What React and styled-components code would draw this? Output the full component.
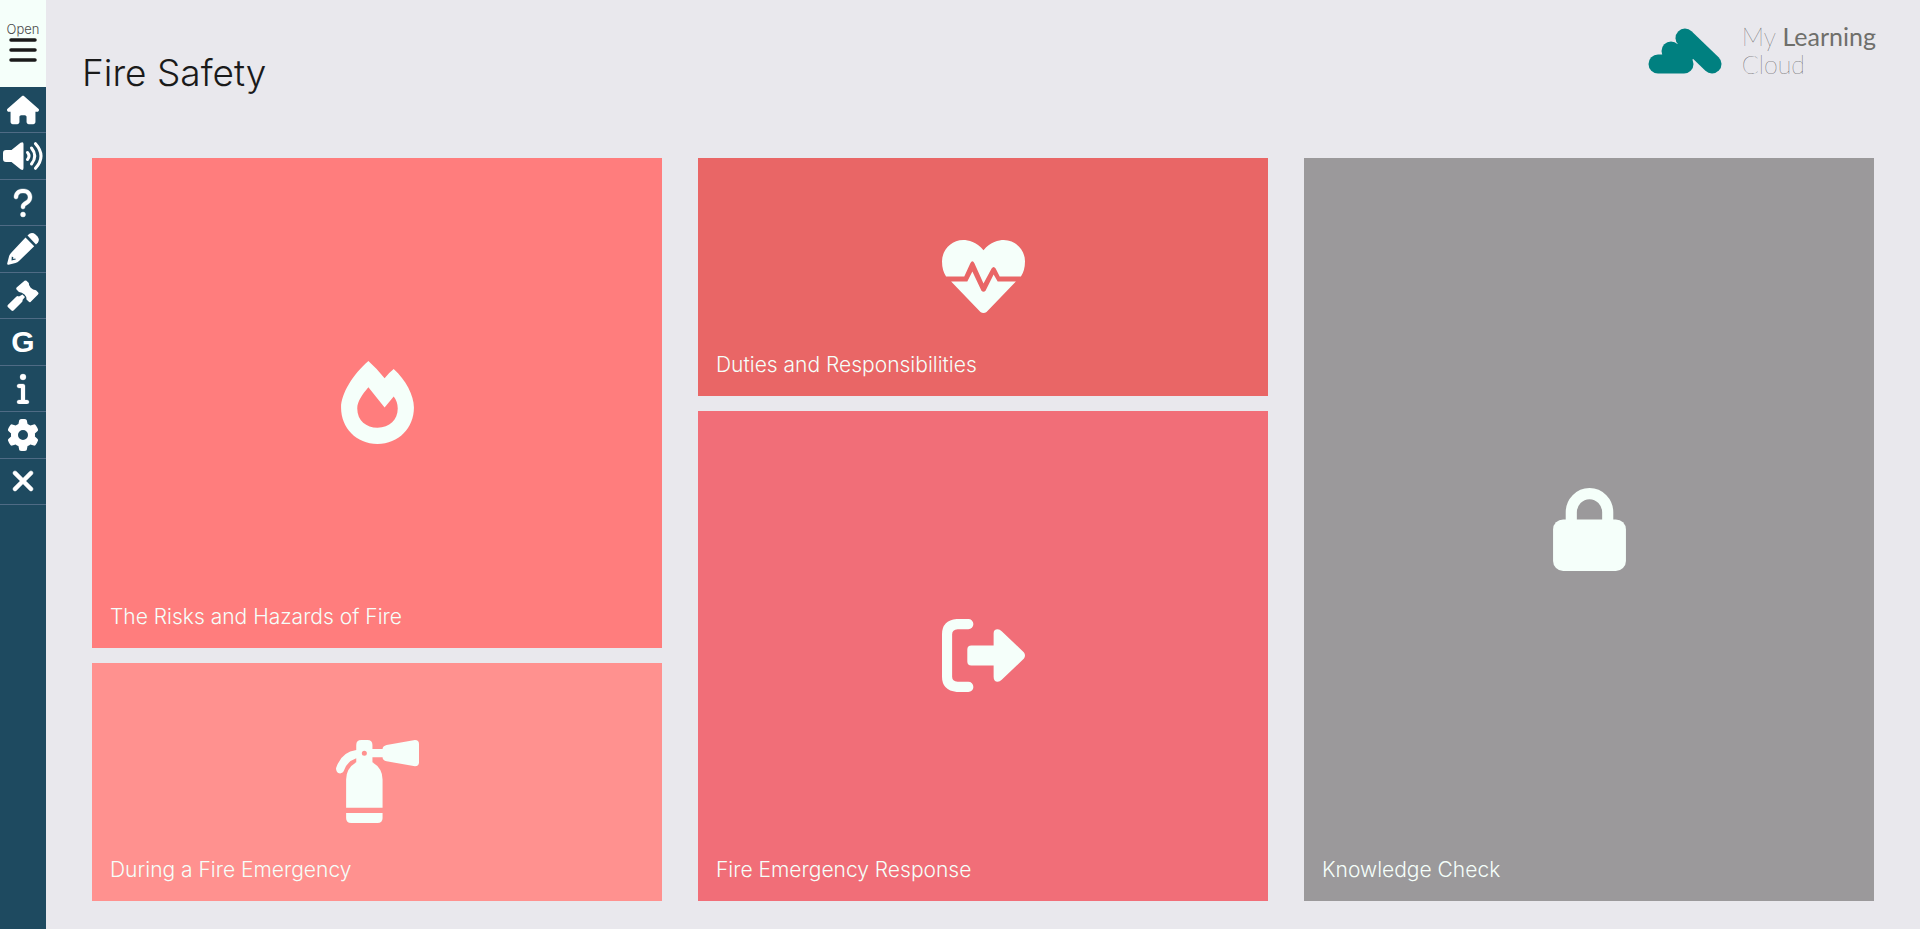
import styled, { createGlobalStyle } from "styled-components";
import {
  FaHouse,
  FaQuestion,
  FaInfo,
  FaGear,
  FaXmark,
} from "react-icons/fa6";

const GlobalStyle = createGlobalStyle`
  * {
    box-sizing: border-box;
  }
  body {
    margin: 0;
    background: #e9e8ed;
    color: #1a1a1a;
    font-family: Inter, "Open Sans", sans-serif;
    font-weight: 300;
  }
`;

const VolumeIcon = () => (
  <svg width="40" height="28" viewBox="0 0 40 28" fill="#ffffff">
    <path d="M3 8H8.5L17.5.8Q20.5-1 20.5 2V26Q20.5 29 17.5 27.2L8.5 20H3Q0 20 0 17V11Q0 8 3 8Z" />
    <g fill="none" stroke="#ffffff" strokeWidth="3" strokeLinecap="round">
      <path d="M24.5 10.5Q27.5 14 24.500 17.500" />
      <path d="M28.500 6Q35 14 28.500 22" />
      <path d="M32.500 1.700Q43.500 14 32.500 26.300" />
    </g>
  </svg>
);

const PencilIcon = () => (
  <svg width="32" height="32" viewBox="0 0 32 32" fill="#ffffff">
    <path d="M20.500 2.500L22.500 .8Q25.500-1 28.500 1.500L30.500 3.500Q33 6.500 31 9.500L29 11.500Z" />
    <path
      fillRule="evenodd"
      d="M18.500 4.500L27.200 13.300L12 28Q10.500 29.300 8.500 30L1.500 31.800Q0 32 .2 30.500L2 23.500Q2.500 21.500 4 20ZM4.800 23.500L4.500 27.500L8.800 26.500L8.300 25.600L6.200 26L6.300 24.200Z"
    />
  </svg>
);

const GavelIcon = () => (
  <svg width="32" height="32" viewBox="0 0 32 32" fill="#ffffff">
    <path d="M17.500.8Q18.500 0 19.500.8L21.800 3Q21.500 5.500 23.700 7.700Q26 10 29 10.200L31.200 12.500Q32 13.500 31 14.500L23.500 22Q22.500 22.600 21.600 21.600L19.500 19.500Q20 17 17.500 14.500Q15 12 12 12L9.500 9.500Q8.800 8.500 9.600 7.600Z" />
    <path d="M15.500 14.500L18 17L15.500 20Q16 21 15 22L6.500 30.600Q5.500 31.500 4.500 30.600L.8 27Q0 26 .8 25L9.500 16.500Q10.500 15.500 12 16.500Z" />
  </svg>
);

const FlameIcon = () => (
  <svg width="73" height="83" viewBox="0 0 72 82" fill="#f5fffa">
    <path
      fillRule="evenodd"
      d="M27 0Q36 8 43 17Q47 12 52 8C64 19 72 34 72 46C72 66 57 82 36 82C15 82 0 66 0 46C0 32 12 13 27 0ZM27 26C21 33 16 40 16 47C16 59 25 66 36 66C48 66 56 58 56 47Q56 40 52 35L43 46Z"
    />
  </svg>
);

const ExtinguisherIcon = () => (
  <svg width="83" height="83" viewBox="0 0 82 82" fill="#f5fffa">
    <path
      fillRule="evenodd"
      d="M25 0H31Q36 0 36 5V9H46Q46 6 50 5L78 0Q82 0 82 4V22Q82 26 78 26L50 21Q46 20 46 17H36V22Q46 28 46 39V67H10V39Q10 28 20 22V18Q11 21 8 30Q7 33 4 33Q0 33 0 28Q5 12 20 10V5Q20 0 25 0ZM28 10.500A2.500 2.500 0 1 0 28 15.500A2.500 2.500 0 1 0 28 10.500Z"
    />
    <path d="M10 72H46V77Q46 82 41 82H15Q10 82 10 77Z" />
  </svg>
);

const HeartIcon = () => (
  <svg width="83" height="73" viewBox="0 0 82 72" fill="#f5fffa">
    <path d="M41 10C48 2 56 0 61 0C73 0 82 10 82 21Q82 30 78 36H57L53 28Q51 25 49 28L41 43L32 23Q30 19 28 23L22 36H4Q0 30 0 21C0 10 9 0 21 0C26 0 34 2 41 10Z" />
    <path d="M9 41H25L30 31L39 50Q41 52 43 50L51 34L55 41H73L44 71Q41 73 38 71Z" />
  </svg>
);

const ExitIcon = () => (
  <svg width="83" height="73" viewBox="0 0 82 72" fill="#f5fffa">
    <path
      d="M26 5H15Q5 6 5 15V57Q5 66 15 67H26"
      fill="none"
      stroke="#f5fffa"
      strokeWidth="10"
      strokeLinecap="round"
    />
    <path d="M29 26H51V14Q51 10 55 10Q57 10 59 12L81 33Q83 36 81 39L59 60Q57 62 55 62Q51 62 51 57V46H29Q25 46 25 42V30Q25 26 29 26Z" />
  </svg>
);

const LockIcon = () => (
  <svg width="73" height="83" viewBox="0 0 72 82" fill="#f5fffa">
    <rect y="31" width="72" height="51" rx="10" />
    <path
      d="M18 34V24A18 18.500 0 0 1 54 24V34"
      fill="none"
      stroke="#f5fffa"
      strokeWidth="11"
    />
  </svg>
);

const CloudLogo = () => (
  <svg width="74" height="46" viewBox="0 0 74 46" fill="#008080">
    <path d="M20 24L37 10L50 26L44 32L40 40L24 36Z" />
    <g stroke="#008080" strokeWidth="19" strokeLinecap="round">
      <path d="M10 36H36" />
      <path d="M23 23L35 35" />
      <path d="M37 10L64 36" />
    </g>
  </svg>
);

const navItems = [
  { label: "Home", icon: <FaHouse /> },
  { label: "Audio", icon: <VolumeIcon /> },
  { label: "Help", icon: <FaQuestion strokeWidth="6" /> },
  { label: "Notes", icon: <PencilIcon /> },
  { label: "Legislation", icon: <GavelIcon /> },
  { label: "Glossary", icon: "G" },
  { label: "Information", icon: <FaInfo strokeWidth="4" /> },
  { label: "Settings", icon: <FaGear /> },
  { label: "Exit", icon: <FaXmark strokeWidth="8" /> },
];

const columns = [
  [
    { title: "The Risks and Hazards of Fire", icon: <FlameIcon />, color: "#ff7d7d", rows: 2 },
    { title: "During a Fire Emergency", icon: <ExtinguisherIcon />, color: "#ff918f", rows: 1 },
  ],
  [
    { title: "Duties and Responsibilities", icon: <HeartIcon />, color: "#e96666", rows: 1 },
    { title: "Fire Emergency Response", icon: <ExitIcon />, color: "#f16e78", rows: 2 },
  ],
  [{ title: "Knowledge Check", icon: <LockIcon />, color: "#9b999b", rows: 3 }],
];

const App = () => {
  return (
    <Page>
      <GlobalStyle />
      <Sidebar>
        <MenuButton>
          Open
          <MenuLines viewBox="0 0 28 24">
            <path d="M2 2H26M2 12H26M2 22H26" />
          </MenuLines>
        </MenuButton>
        <NavList>
          {navItems.map((item) => (
            <NavButton key={item.label} aria-label={item.label}>
              {item.icon}
            </NavButton>
          ))}
        </NavList>
      </Sidebar>
      <Main>
        <Header>
          <Title>Fire Safety</Title>
          <Logo>
            <CloudLogo />
            <LogoText>
              My <strong>Learning</strong>
              <br />
              Cloud
            </LogoText>
          </Logo>
        </Header>
        <Board>
          {columns.map((tiles, index) => (
            <Column key={index}>
              {tiles.map((tile) => (
                <Tile
                  key={tile.title}
                  href="#"
                  $color={tile.color}
                  $rows={tile.rows}
                >
                  <TileIcon>{tile.icon}</TileIcon>
                  <TileTitle>{tile.title}</TileTitle>
                </Tile>
              ))}
            </Column>
          ))}
        </Board>
      </Main>
    </Page>
  );
};

const Page = styled.div`
  display: flex;
  min-height: 100vh;
`;

const Sidebar = styled.nav`
  display: flex;
  flex-direction: column;
  flex: 0 0 46px;
  background: #1e4a60;
`;

const MenuButton = styled.button`
  display: flex;
  flex-direction: column;
  align-items: center;
  height: 87px;
  padding: 20px 0 0;
  border: none;
  background: #f5fffa;
  color: #4a4a4a;
  font: 300 13px/18px Inter, sans-serif;
  cursor: pointer;
`;

const MenuLines = styled.svg`
  width: 28px;
  height: 24px;
  overflow: visible;
  stroke: #1a1a1a;
  stroke-width: 3.5;
  stroke-linecap: round;
`;

const NavList = styled.div`
  display: grid;
  grid-template-rows: repeat(9, 1fr);
  height: 45vh;
  min-height: 414px;
`;

const NavButton = styled.button`
  display: flex;
  align-items: center;
  justify-content: center;
  padding: 0;
  border: none;
  border-bottom: 1px solid #4f6b85;
  background: transparent;
  color: #ffffff;
  font: bold 30px/44px "Liberation Sans", sans-serif;
  cursor: pointer;
  svg {
    flex-shrink: 0;
    font-size: 32px;
  }
  &:hover {
    background: #163a4c;
  }
`;

const Main = styled.main`
  display: flex;
  flex-direction: column;
  flex: 1;
  padding: 0 46px 28px;
`;

const Header = styled.header`
  display: flex;
  justify-content: space-between;
  align-items: flex-start;
  height: 158px;
`;

const Title = styled.h1`
  margin: 46px 0 0 -10px;
  font-size: 37px;
  font-weight: 300;
  line-height: 54px;
`;

const Logo = styled.div`
  display: flex;
  align-items: flex-start;
  gap: 20px;
  margin-right: -2px;
  padding-top: 28px;
`;

const LogoText = styled.div`
  margin-top: -6px;
  color: #1a1a1a;
  font: 100 25px/28px Lato, sans-serif;
  strong {
    color: #6f6f6b;
    font-weight: 400;
  }
`;

const Board = styled.div`
  display: grid;
  grid-template-columns: repeat(3, 1fr);
  gap: 36px;
  flex: 1;
`;

const Column = styled.div`
  display: grid;
  grid-template-rows: repeat(3, 1fr);
  gap: 15px;
`;

const Tile = styled.a`
  display: grid;
  grid-row: span ${(props) => props.$rows};
  background: ${(props) => props.$color};
  color: #f5fffa;
  text-decoration: none;
`;

const TileIcon = styled.span`
  display: flex;
  grid-area: 1 / 1;
  place-self: center;
  padding-bottom: 1px;
`;

const TileTitle = styled.span`
  grid-area: 1 / 1;
  align-self: end;
  padding: 0 18px 15px;
  font-size: 21px;
  line-height: 32px;
`;

export default App;
